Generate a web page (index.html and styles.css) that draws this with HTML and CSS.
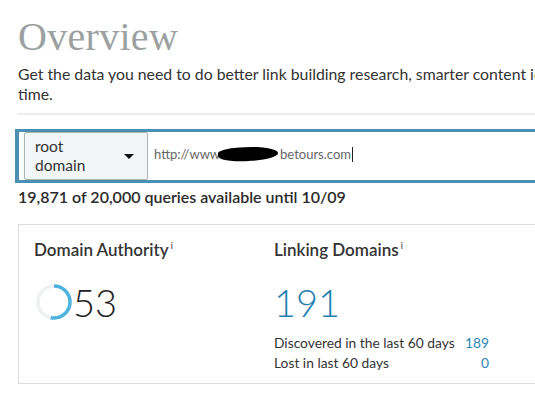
FILE: index.html
```html
<!DOCTYPE html>
<html lang="en">
<head>
  <meta charset="UTF-8">
  <title>Overview</title>
  <link rel="stylesheet" href="styles.css">
</head>
<body>
  <div class="page">
    <h1 class="title">Overview</h1>
    <p class="intro">Get the data you need to do better link building research, smarter content ideation, and more<br>time.</p>
    <hr class="rule">

    <div class="search">
      <div class="scope">
        <span class="scope-label">root<br>domain</span>
        <span class="caret"></span>
      </div>
      <div class="url">http://www<span class="blot"></span>betours.com<span class="cursor"></span></div>
    </div>
    <p class="quota">19,871 of 20,000 queries available until 10/09</p>

    <div class="card">
      <div class="metric metric-da">
        <h2 class="metric-title">Domain Authority<sup>i</sup></h2>
        <div class="da-row">
          <svg class="ring" width="38" height="38" viewBox="0 0 38 38">
            <circle cx="19" cy="19" r="16" fill="none" stroke="#eef2f3" stroke-width="3.5"/>
            <circle cx="19" cy="19" r="16" fill="none" stroke="#4fb3e0" stroke-width="3.5"
                    stroke-dasharray="53.3 100.5" transform="rotate(-90 19 19)"/>
          </svg>
          <span class="big">53</span>
        </div>
      </div>
      <div class="metric">
        <h2 class="metric-title">Linking Domains<sup>i</sup></h2>
        <div class="big big-blue">191</div>
        <div class="stats">
          <div class="stat"><span>Discovered in the last 60 days</span><span class="stat-num">189</span></div>
          <div class="stat"><span>Lost in last 60 days</span><span class="stat-num">0</span></div>
        </div>
      </div>
    </div>
  </div>
</body>
</html>
```

FILE: styles.css
```css
:root {
  --blue-border: #4a8fb3;
  --link-blue: #2a86b5;
  --text-color: #2b2b2b;
}

html, body {
  margin: 0;
  overflow: hidden;
  background: #fff;
}

body {
  font-family: 'Lato', sans-serif;
  color: var(--text-color);
}

.page {
  width: 560px;
  padding: 0 0 0 18px;
}

.title {
  margin: 0;
  padding-top: 15px;
  font-family: 'Liberation Serif', serif;
  font-weight: normal;
  font-size: 40px;
  line-height: 44px;
  color: #9ba1a1;
  letter-spacing: 0.3px;
}

.intro {
  margin: 5px 0 0;
  width: 640px;
  font-size: 15.8px;
  line-height: 20px;
  white-space: nowrap;
  color: #333;
}

.rule {
  margin: 9px 0 0;
  border: none;
  border-top: 2px solid #ececec;
}

.search {
  display: flex;
  align-items: center;
  margin: 14px 0 0 -3px;
  border: 3px solid var(--blue-border);
  border-left-width: 4px;
  border-right: none;
  height: 48px;
  padding: 0 0 0 5px;
  background: #fff;
}

.scope {
  display: flex;
  align-items: center;
  justify-content: space-between;
  box-sizing: border-box;
  width: 124px;
  height: 48px;
  padding: 0 13px 0 10px;
  background: #f2f6f6;
  border: 1px solid #a9b4b6;
  border-radius: 2px;
  font-size: 15.5px;
  line-height: 19px;
  color: #333;
}

.caret {
  width: 0;
  height: 0;
  border-left: 5px solid transparent;
  border-right: 5px solid transparent;
  border-top: 5px solid #111;
}

.url {
  display: flex;
  align-items: center;
  margin-left: 6px;
  font-size: 13px;
  color: #666;
  margin-top: -4px;
}

.blot {
  display: inline-block;
  width: 60px;
  height: 14px;
  margin: 0 2px 0 -2px;
  background: #000;
  border-radius: 40% 60% 50% 50%;
  transform: rotate(-3deg);
}

.cursor {
  display: inline-block;
  width: 1px;
  height: 15px;
  background: #222;
  margin-left: 1px;
}

.quota {
  margin: 3px 0 0;
  font-size: 16px;
  font-weight: 600;
  line-height: 22px;
  color: #2b2b2b;
}

.card {
  display: flex;
  margin-top: 16px;
  height: 160px;
  box-sizing: border-box;
  border: 1px solid #dedede;
  border-right: none;
  padding: 10px 0 0 15px;
}

.metric {
  width: 240px;
}

.metric-title {
  margin: 0;
  font-size: 17px;
  font-weight: 600;
  line-height: 22px;
  color: #333;
}

.metric-title sup {
  font-size: 9px;
  font-weight: normal;
  margin-left: 2px;
}

.da-row {
  display: flex;
  align-items: center;
  margin-top: 19px;
}

.ring {
  margin-left: 1px;
}

.big {
  font-size: 38px;
  line-height: 44px;
  font-weight: 300;
  color: #222;
}

.big-blue {
  margin-top: 19px;
  color: #1f7fb0;
}

.stats {
  margin-top: 9px;
  width: 215px;
  font-size: 13.8px;
  line-height: 20px;
  color: #333;
}

.stat {
  display: flex;
  justify-content: space-between;
}

.stat-num {
  color: var(--link-blue);
}
```
